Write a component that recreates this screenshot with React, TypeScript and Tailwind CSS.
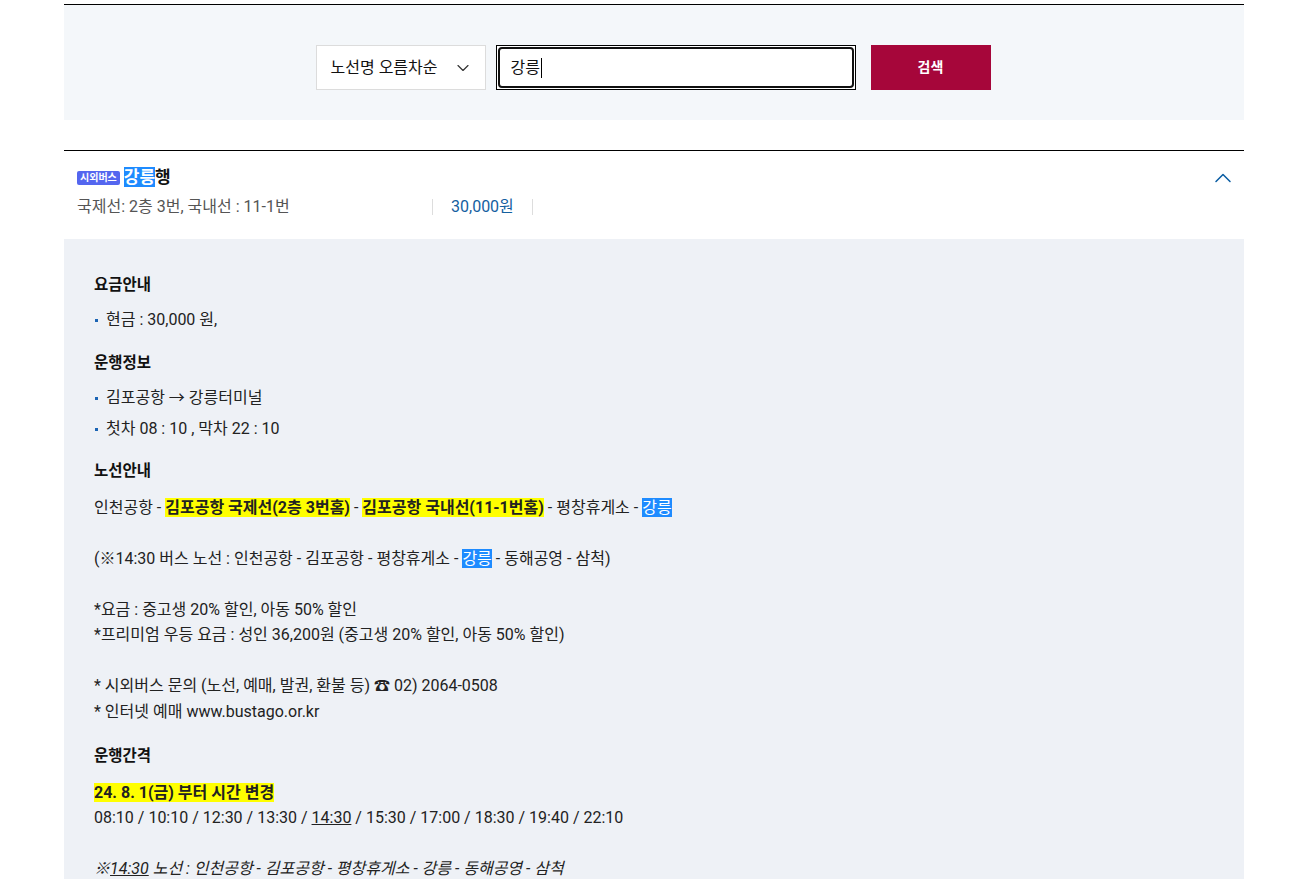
import { ChevronDown, ChevronUp } from "lucide-react";

const font = { fontFamily: 'Roboto, "Noto Sans CJK KR", sans-serif' };

function Hl({ children }: { children: React.ReactNode }) {
  return <span className="bg-[#1e8bff] text-white">{children}</span>;
}

function Mark({ children }: { children: React.ReactNode }) {
  return <span className="bg-[#ffff00] font-bold">{children}</span>;
}

function Bullet({ children }: { children: React.ReactNode }) {
  return (
    <li className="relative pl-[12px]">
      <span className="absolute left-[1px] top-[12px] h-[3px] w-[3px] bg-[#1b64b4]" />
      {children}
    </li>
  );
}

export default function App() {
  return (
    <div className="min-h-screen bg-white text-[#222]" style={font}>
      <div className="ml-[64px] w-[1180px]">
        {/* search */}
        <div className="mt-[4px] border-t border-black bg-[#f4f7fa] pt-[40px] pb-[30px]">
          <div className="flex justify-center pr-[2px]">
            <div className="flex h-[45px] w-[170px] items-center justify-between border border-[#dcdcdc] bg-white pl-[14px] pr-[12px] text-[16px] text-[#111]">
              <span>노선명 오름차순</span>
              <ChevronDown size={20} strokeWidth={1.4} className="text-[#333]" />
            </div>
            <div className="ml-[10px] h-[45px] w-[360px] border border-black bg-white p-px">
              <div className="flex h-full items-center rounded-[4px] border-[2px] border-[#111] pl-[11px] text-[16px] text-[#111]">
                강릉<span className="ml-px h-[20px] w-px bg-black" />
              </div>
            </div>
            <button className="ml-[15px] h-[45px] w-[120px] bg-[#a6063a] text-[14px] font-semibold text-white">
              검색
            </button>
          </div>
        </div>

        {/* result header */}
        <div className="mt-[30px] border-t border-black">
          <div className="relative h-[88px] pl-[13px] pt-[14px]">
            <div className="flex items-center">
              <span className="flex h-[14px] items-center rounded-[2px] bg-[#5466ef] px-[3px] text-[10px] font-bold leading-none text-white">
                시외버스
              </span>
              <span className="ml-[4px] text-[17px] font-bold leading-[25px] text-[#111]">
                <Hl>강릉</Hl>행
              </span>
            </div>
            <div className="mt-[6px] flex items-center text-[16px] leading-[22px] text-[#555]">
              <span className="w-[355px]">국제선: 2층 3번, 국내선 : 11-1번</span>
              <span className="border-l border-r border-[#dddddd] px-[18px] leading-[16px] text-[#14609f]">
                30,000원
              </span>
            </div>
            <ChevronUp
              size={28}
              strokeWidth={1.3}
              className="absolute right-[7px] top-[13px] text-[#0b5ea3]"
            />
          </div>

          {/* detail */}
          <div className="bg-[#eef1f6] pb-[20px] pl-[30px] pt-[34px] text-[16px] leading-[25.5px] text-[#222]">
            <h4 className="text-[15.5px] font-bold text-[#111]">요금안내</h4>
            <ul className="mt-[8px]">
              <Bullet>현금 : 30,000 원,</Bullet>
            </ul>

            <h4 className="mt-[19px] text-[15.5px] font-bold text-[#111]">운행정보</h4>
            <ul className="mt-[8px] space-y-[5.5px]">
              <Bullet>김포공항 → 강릉터미널</Bullet>
              <Bullet>첫차 08 : 10 , 막차 22 : 10</Bullet>
            </ul>

            <h4 className="mt-[18px] text-[15.5px] font-bold text-[#111]">노선안내</h4>
            <p className="mt-[10px]">
              인천공항 - <Mark>김포공항 국제선(2층 3번홈)</Mark> - <Mark>김포공항 국내선(11-1번홈)</Mark> - 평창휴게소 - <Hl>강릉</Hl>
              <br />
              <br />
              (※14:30 버스 노선 : 인천공항 - 김포공항 - 평창휴게소 - <Hl>강릉</Hl> - 동해공영 - 삼척)
              <br />
              <br />
              *요금 : 중고생 20% 할인, 아동 50% 할인
              <br />
              *프리미엄 우등 요금 : 성인 36,200원 (중고생 20% 할인, 아동 50% 할인)
              <br />
              <br />
              * 시외버스 문의 (노선, 예매, 발권, 환불 등) ☎ 02) 2064-0508
              <br />
              * 인터넷 예매 www.bustago.or.kr
            </p>

            <h4 className="mt-[20px] text-[15.5px] font-bold text-[#111]">운행간격</h4>
            <p className="mt-[10px]">
              <Mark>24. 8. 1(금) 부터 시간 변경</Mark>
              <br />
              08:10 / 10:10 / 12:30 / 13:30 / <span className="underline">14:30</span> / 15:30 / 17:00 / 18:30 / 19:40 / 22:10
              <br />
              <br />
              <em>
                ※<span className="underline">14:30</span> 노선 : 인천공항 - 김포공항 - 평창휴게소 - 강릉 - 동해공영 - 삼척
              </em>
            </p>
          </div>
        </div>
      </div>
    </div>
  );
}
